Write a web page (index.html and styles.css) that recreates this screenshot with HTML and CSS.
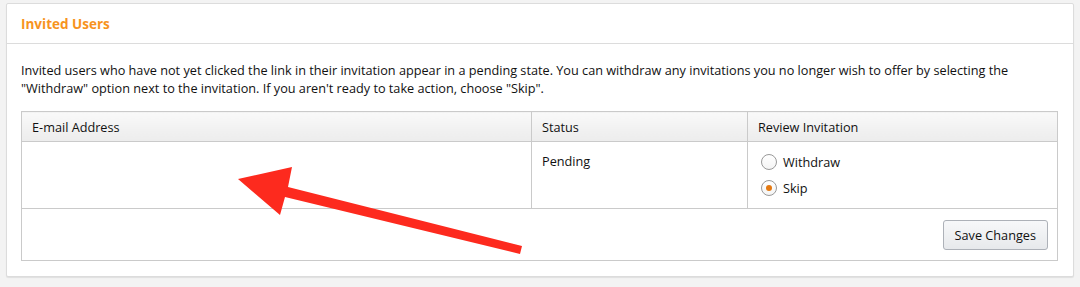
FILE: index.html
```html
<!DOCTYPE html>
<html lang="en">

<head>
    <meta charset="UTF-8">
    <meta name="viewport" content="width=device-width, initial-scale=1.0">
    <title>Invited Users</title>
    <link rel="stylesheet" href="styles.css">
</head>

<body>
    <div class="panel">
        <div class="panel-header">Invited Users</div>
        <div class="panel-body">
            <p class="description">
                Invited users who have not yet clicked the link in their invitation appear in a pending state. You can withdraw any invitations you no longer wish to offer by selecting the
                "Withdraw" option next to the invitation. If you aren't ready to take action, choose "Skip".
            </p>
            <table class="invite-table">
                <thead>
                    <tr>
                        <th class="col-email">E-mail Address</th>
                        <th class="col-status">Status</th>
                        <th class="col-review">Review Invitation</th>
                    </tr>
                </thead>
                <tbody>
                    <tr class="invite-row">
                        <td></td>
                        <td>Pending</td>
                        <td>
                            <label class="radio-option">
                                <input type="radio" name="review" value="withdraw">
                                <span class="radio-mark"></span>
                                Withdraw
                            </label>
                            <label class="radio-option">
                                <input type="radio" name="review" value="skip" checked>
                                <span class="radio-mark"></span>
                                Skip
                            </label>
                        </td>
                    </tr>
                    <tr class="footer-row">
                        <td colspan="3">
                            <button class="save-button">Save Changes</button>
                        </td>
                    </tr>
                </tbody>
            </table>
        </div>
    </div>

    <!-- annotation arrow drawn on top of the screenshot -->
    <svg class="arrow" width="1080" height="287" viewBox="0 0 1080 287">
        <polygon fill="#fd2a1e" points="238,179 292,167 288,187 522,246 520,254 285,197 280,215" />
    </svg>
</body>

</html>
```

FILE: styles.css
```css
body {
    margin: 0;
    padding: 3px 6px 10px 6px;
    background-color: #f3f3f3;
    font-family: "Open Sans", "Noto Sans", sans-serif;
    font-size: 12.7px;
    color: #111;
    position: relative;
}

.panel {
    background-color: white;
    border: 1px solid #dcdcdc;
    border-radius: 2px;
    box-shadow: 0 1px 1px rgba(0, 0, 0, 0.08);
}

.panel-header {
    height: 39px;
    display: flex;
    align-items: center;
    padding: 0 14px;
    border-bottom: 1px solid #dcdcdc;
    color: #f7931e;
    font-weight: bold;
    font-size: 13.5px;
}

.panel-body {
    padding: 17px 15px 15px 14px;
}

.description {
    margin: 0 0 14px 0;
    line-height: 18px;
}

.invite-table {
    width: 100%;
    border-collapse: collapse;
    border: 1px solid #cacaca;
}

.invite-table th {
    height: 29px;
    padding: 0 10px;
    text-align: left;
    font-weight: normal;
    background: linear-gradient(#f9f9f9, #ececec);
    border: 1px solid #cacaca;
}

.col-email {
    width: 489px;
}

.col-status {
    width: 195px;
}

.invite-row td {
    height: 67px;
    padding: 10px 10px 0 10px;
    vertical-align: top;
    border: 1px solid #cacaca;
    box-sizing: border-box;
}

.radio-option {
    display: flex;
    align-items: center;
    height: 20px;
    margin-bottom: 6px;
    padding-left: 3px;
}

.radio-option input {
    display: none;
}

.radio-mark {
    width: 14px;
    height: 14px;
    border: 1px solid #999;
    border-radius: 50%;
    background: linear-gradient(#fff, #f4f4f4);
    margin-right: 6px;
    display: flex;
    align-items: center;
    justify-content: center;
}

.radio-option input:checked + .radio-mark::after {
    content: "";
    width: 6px;
    height: 6px;
    border-radius: 50%;
    background-color: #e47911;
}

.footer-row td {
    height: 51px;
    padding: 0 9px 0 0;
    text-align: right;
    vertical-align: middle;
}

.save-button {
    height: 30px;
    padding: 0 11px;
    font-family: inherit;
    font-size: 12.7px;
    color: #111;
    border: 1px solid #adb1b8;
    border-radius: 3px;
    background: linear-gradient(#f7f8fa, #e7e9ec);
}

.arrow {
    position: absolute;
    left: 0;
    top: 0;
    pointer-events: none;
}
```
